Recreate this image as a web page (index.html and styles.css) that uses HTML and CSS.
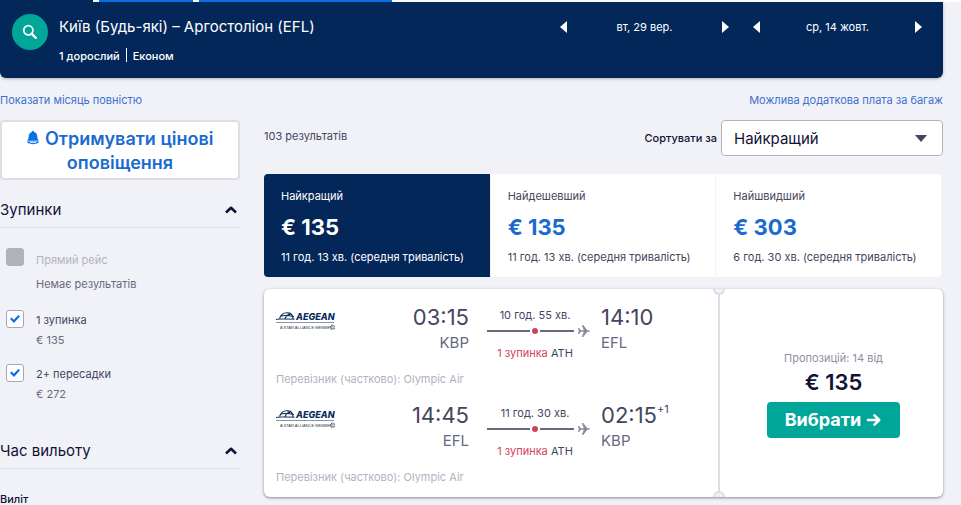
FILE: index.html
```html
<!DOCTYPE html>
<html lang="uk">
<head>
<meta charset="utf-8">
<title>Київ – Аргостоліон</title>
<link rel="stylesheet" href="styles.css">
</head>
<body>
<svg class="defs" aria-hidden="true">
  <symbol id="aegean" viewBox="0 0 60 22">
    <path d="M0 8.500C4 7.800 9 8 18.500 8.200" fill="none" stroke="#0a2d5c" stroke-width="1"/>
    <path d="M3.500 7.500C5 3.500 8.500 1.500 12 1.800c3.200.3 5 2.700 5 6.200M4.500 5.200C8 4 13 4.500 18 5.500M9 8C10 5 11.500 3.500 14.500 3.200" fill="none" stroke="#0a2d5c" stroke-width="1.200"/>
    <text x="20" y="9" class="logo-name">AEGEAN</text>
    <path d="M0 11.500H58" stroke="#8496ad" stroke-width="1"/>
    <text x="4" y="17.500" class="logo-tag">A STAR ALLIANCE MEMBER</text>
    <path d="M56 13.500l1 1.300 1.600.1-.6 1.500.5 1.600-1.500-.2-1.400.9-.5-1.600-1.300-1 1.400-.8z" fill="none" stroke="#555c66" stroke-width=".8"/>
  </symbol>
  <symbol id="route" viewBox="0 0 104 14">
    <path d="M0 7H43M53 7H87" stroke="#68697f" stroke-width="2"/>
    <circle cx="48" cy="7" r="3" fill="#d1435b"/>
    <path d="M91 4h1.200l1.600 2.200h3L94.800 1H96.200l4.200 5.200H102c1.300 0 1.300 1.600 0 1.600h-1.600L96.200 13H94.800l2-5.200h-3L92.200 10H91l.8-3z" fill="#8a8b9c"/>
  </symbol>
  <symbol id="chevron" viewBox="0 0 14 10">
    <path d="M2 7.500L7 2.800l5 4.700" fill="none" stroke="#111236" stroke-width="2.600" stroke-linejoin="round"/>
  </symbol>
</svg>

<div class="strip"><span class="seg seg-dark"></span><span class="seg seg-mid"></span><span class="seg seg-wide"></span></div>
<div class="page">
  <header class="search">
    <button class="search-btn" aria-label="Пошук">
      <svg width="16" height="16" viewBox="0 0 16 16"><circle cx="6.300" cy="6.300" r="4.600" fill="none" stroke="#fff" stroke-width="1.800"/><path d="M9.800 9.800l4 4" stroke="#fff" stroke-width="2.400" stroke-linecap="round"/></svg>
    </button>
    <div class="trip">
      <h1 class="trip-title">Київ (Будь-які) – Аргостоліон (EFL)</h1>
      <p class="trip-info"><span class="pax">1 дорослий</span><span class="cabin">Економ</span></p>
    </div>
    <div class="dates">
      <div class="date"><button class="arrow arrow-prev" aria-label="Попередній день"></button><span>вт, 29 вер.</span><button class="arrow arrow-next" aria-label="Наступний день"></button></div>
      <div class="date"><button class="arrow arrow-prev" aria-label="Попередній день"></button><span>ср, 14 жовт.</span><button class="arrow arrow-next" aria-label="Наступний день"></button></div>
    </div>
  </header>

  <nav class="links"><a href="#month">Показати місяць повністю</a><a href="#bags">Можлива додаткова плата за багаж</a></nav>

  <div class="columns">
    <aside class="filters">
      <button class="alert">
        <svg class="bell" width="14" height="16" viewBox="0 0 14 16"><path d="M7 1c.8 0 1.200.5 1.200 1.100C10.400 2.700 11.200 4.500 11.300 6.500c.1 2 .6 3 1.500 4.200H1.200C2.100 9.500 2.600 8.500 2.700 6.500c.1-2 .9-3.800 3.100-4.400C5.800 1.500 6.200 1 7 1zM1 11.600h12c.2 1.200-2.300 2.600-6 2.600s-6.200-1.400-6-2.600z" fill="#0770e3"/><path d="M4 12.300h6" stroke="#fff" stroke-width="1"/></svg>
        Отримувати цінові оповіщення
      </button>

      <section class="group">
        <h2 class="group-head"><span>Зупинки</span><svg class="chev" width="14" height="10"><use href="#chevron"/></svg></h2>
        <ul class="stops">
          <li class="stop stop-off"><input type="checkbox" id="s0" disabled><div><label for="s0">Прямий рейс</label><p>Немає результатів</p></div></li>
          <li class="stop"><input type="checkbox" id="s1" checked><div><label for="s1">1 зупинка</label><p>€ 135</p></div></li>
          <li class="stop"><input type="checkbox" id="s2" checked><div><label for="s2">2+ пересадки</label><p>€ 272</p></div></li>
        </ul>
      </section>
      <section class="group">
        <h2 class="group-head"><span>Час вильоту</span><svg class="chev" width="14" height="10"><use href="#chevron"/></svg></h2>
        <h3 class="sub">Виліт</h3>
      </section>
    </aside>

    <main class="results">
      <div class="bar">
        <span class="count">103 результатів</span>
        <label class="sort-label" for="sort">Сортувати за</label>
        <div class="sort"><select id="sort"><option>Найкращий</option></select></div>
      </div>

      <div class="tabs">
        <button class="tab tab-on"><span>Найкращий</span><strong>€ 135</strong><span>11 год. 13 хв. (середня тривалість)</span></button>
        <button class="tab"><span>Найдешевший</span><strong>€ 135</strong><span>11 год. 13 хв. (середня тривалість)</span></button>
        <button class="tab"><span>Найшвидший</span><strong>€ 303</strong><span>6 год. 30 хв. (середня тривалість)</span></button>
      </div>

      <article class="ticket">
        <div class="legs">
          <div class="leg">
            <svg class="logo" width="60" height="22" role="img" aria-label="Aegean"><use href="#aegean"/></svg>
            <div class="point dep"><p class="time">03:15</p><p class="code">KBP</p></div>
            <div class="path"><p>10 год. 55 хв.</p><svg class="route" width="104" height="14"><use href="#route"/></svg><p><span class="red">1 зупинка</span> ATH</p></div>
            <div class="point"><p class="time">14:10</p><p class="code">EFL</p></div>
            <p class="carrier">Перевізник (частково): Olympic Air</p>
          </div>
          <div class="leg">
            <svg class="logo" width="60" height="22" role="img" aria-label="Aegean"><use href="#aegean"/></svg>
            <div class="point dep"><p class="time">14:45</p><p class="code">EFL</p></div>
            <div class="path"><p>11 год. 30 хв.</p><svg class="route" width="104" height="14"><use href="#route"/></svg><p><span class="red">1 зупинка</span> ATH</p></div>
            <div class="point"><p class="time">02:15<sup>+1</sup></p><p class="code">KBP</p></div>
            <p class="carrier">Перевізник (частково): Olympic Air</p>
          </div>
        </div>
        <div class="offer">
          <p class="deals">Пропозицій: 14 від</p>
          <p class="price">€ 135</p>
          <button class="select">Вибрати <svg width="16" height="14" viewBox="0 0 16 14"><path d="M2 7h11M8.500 2.300L13.200 7l-4.700 4.700" fill="none" stroke="#fff" stroke-width="2.600" stroke-linecap="round" stroke-linejoin="round"/></svg></button>
        </div>
      </article>
    </main>
  </div>
</div>
</body>
</html>
```
FILE: styles.css
```css
* { box-sizing: border-box; margin: 0; padding: 0; }
html { scrollbar-width: none; }
body { background: #f1f2f8; color: #444560; font: 11px/20px Inter, sans-serif; }
button { border: 0; background: none; font: inherit; color: inherit; cursor: pointer; }
a { color: #3d70cf; text-decoration: none; }
ul { list-style: none; }
.defs { position: absolute; width: 0; height: 0; }
.logo-name { font: italic 800 9px Inter, sans-serif; fill: #0a2d5c; }
.logo-tag { font: 400 4px "Liberation Sans", sans-serif; fill: #33383f; }

.strip { display: flex; gap: 6px; height: 2px; background: #fff; }
.seg { background: #0770e3; }
.seg-dark { width: 93px; background: #042759; }
.seg-mid { width: 94px; }
.seg-wide { width: 193px; }

.page { padding-right: 18px; }
.search { display: flex; align-items: flex-start; height: 76px; padding: 12px 21px 0 12px; background: #042759; color: #fff; border-radius: 0 0 6px 6px; box-shadow: 0 1px 3px rgba(37, 32, 31, .3); }
.search-btn { display: grid; place-items: center; width: 36px; height: 36px; border-radius: 50%; background: #00a698; }
.trip { flex: 1; margin-left: 11px; }
.trip-title { font-size: 15px; line-height: 26px; font-weight: 400; }
.trip-info { display: flex; margin-top: 6px; font-weight: 500; }
.pax { padding-right: 6px; }
.cabin { position: relative; padding-left: 7px; }
.cabin::before { content: ""; position: absolute; left: 0; top: 2px; height: 14px; width: 1px; background: #fff; }
.dates { display: flex; gap: 24px; padding-top: 3px; }
.date { display: flex; justify-content: space-between; align-items: center; width: 169px; }
.arrow { width: 7px; height: 12px; background: #fff; }
.arrow-prev { clip-path: polygon(100% 0, 100% 100%, 0 50%); }
.arrow-next { clip-path: polygon(0 0, 100% 50%, 0 100%); }

.links { display: flex; justify-content: space-between; margin-top: 12px; }
.columns { display: grid; grid-template-columns: 240px 1fr; gap: 24px; margin-top: 10px; }

.alert { width: 100%; padding: 5px 16px 3px; border: 2px solid #dddde5; border-radius: 4px; background: #fff; color: #1a6bce; font-size: 18px; line-height: 24px; font-weight: 600; }
.bell { vertical-align: -1px; }
.group { padding-top: 18px; }
.group-head { display: flex; justify-content: space-between; align-items: center; padding-bottom: 5px; border-bottom: 1px solid #dddde5; color: #111236; font-size: 15px; line-height: 24px; font-weight: 400; }
.chev { margin-right: 2px; }
.stops { display: grid; gap: 14px; padding: 20px 0 17px 6px; }
.stop { display: flex; gap: 12px; }
.stop p { color: #68697f; }
.stop input { appearance: none; display: grid; place-items: center; flex: none; width: 18px; height: 18px; border: 1px solid #a5a6b8; border-radius: 3px; background: #fff; }
.stop input:checked::before { content: ""; width: 10px; height: 8px; background: #0770e3; clip-path: polygon(0 50%, 16% 32%, 38% 60%, 84% 0, 100% 16%, 40% 100%); }
.stop input:disabled { background: #b2b2bf; border-color: #b2b2bf; }
.stop-off { line-height: 24px; }
.stop-off label { color: #b2b2bf; }
.sub { margin-top: 22px; color: #111236; font-size: 11px; line-height: 16px; font-weight: 500; }

.bar { display: flex; align-items: center; height: 36px; }
.count { flex: 1; padding-bottom: 4px; }
.sort-label { margin-right: 4px; color: #111236; font-weight: 500; }
.sort { position: relative; width: 222px; }
.sort::after { content: ""; position: absolute; right: 16px; top: 15px; width: 12px; height: 7px; background: #444560; clip-path: polygon(0 0, 100% 0, 50% 100%); pointer-events: none; }
.sort select { appearance: none; display: block; width: 100%; height: 36px; padding: 0 12px; border: 1px solid #b2b2bf; border-radius: 4px; background: #fff; color: #111236; font: 15px Inter, sans-serif; }

.tabs { display: grid; grid-template-columns: repeat(3, 1fr); margin: 18px 2px 0 0; border-radius: 4px; overflow: hidden; background: #fff; }
.tab { padding: 12px 17px 10px; text-align: left; }
.tab + .tab { border-left: 1px solid #f1f2f8; }
.tab span, .tab strong { display: block; white-space: nowrap; }
.tab strong { margin: 9px 0 8px; color: #1a6bce; font-size: 22px; line-height: 24px; font-weight: 700; }
.tab-on strong { color: #fff; }
.tab-on { background: #042759; color: #fff; }

.ticket { display: flex; margin-top: 12px; border-radius: 6px; background: #fff; box-shadow: 0 1px 3px rgba(37, 32, 31, .5); }
.legs { flex: 1; display: grid; gap: 12px; padding: 14px 13px 10px 12px; }
.leg { display: grid; grid-template-columns: 1fr auto 96px 104px; column-gap: 18px; }
.logo { margin-top: 8px; }
.dep { text-align: right; }
.time { display: flex; font-size: 22px; line-height: 28px; }
.time sup { font-size: 11px; line-height: 16px; }
.dep .time { justify-content: flex-end; }
.code { color: #68697f; font-size: 15px; line-height: 24px; }
.path { padding-top: 2px; text-align: center; white-space: nowrap; }
.route { display: block; overflow: visible; margin: -1px 0 5px; }
.red { color: #d1435b; }
.carrier { grid-column: 1 / -1; margin-top: 6px; color: #b2b2bf; }
.offer { position: relative; display: flex; flex-direction: column; align-items: center; justify-content: center; width: 225px; padding-left: 4px; border-left: 2px solid #dddde5; }
.offer::before, .offer::after { content: ""; position: absolute; left: -7px; width: 8px; height: 4px; background: #f1f2f8; border: 2px solid #dddde5; }
.offer::before { top: 0; border-top: 0; border-radius: 0 0 6px 6px; }
.offer::after { bottom: 0; border-bottom: 0; border-radius: 6px 6px 0 0; }
.deals { color: #8f90a0; }
.price { color: #111236; font-size: 22px; line-height: 28px; font-weight: 600; }
.select { display: flex; align-items: center; gap: 5px; margin-top: 6px; padding: 6px 18px; border-radius: 4px; background: #00a698; color: #fff; font-size: 18px; line-height: 24px; font-weight: 700; }
```
